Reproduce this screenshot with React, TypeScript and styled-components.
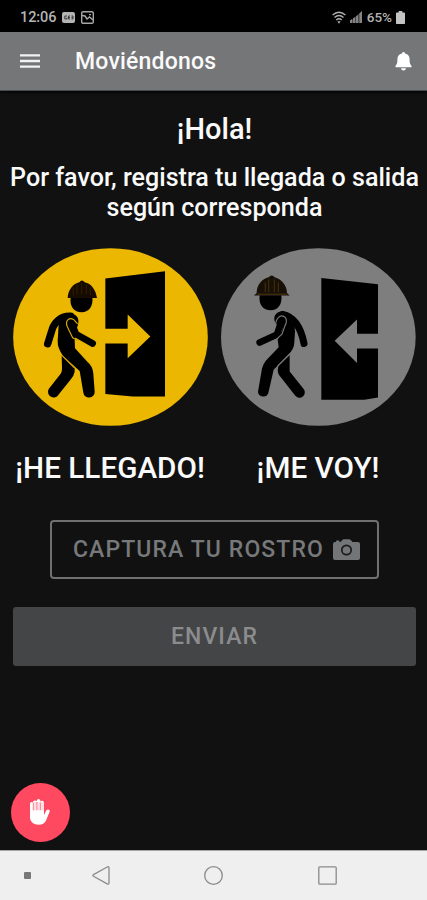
import React from 'react';
import styled, { createGlobalStyle } from 'styled-components';

const GlobalStyle = createGlobalStyle`
  * { box-sizing: border-box; }
  body { margin: 0; background: #111; }
  button { font: inherit; padding: 0; border: 0; background: none; color: inherit; }
  svg { display: block; flex: none; }
`;

const Screen = styled.div`
  display: flex;
  flex-direction: column;
  width: 427px;
  height: 900px;
  overflow: hidden;
  background: #111111;
  color: #fafafa;
  font-family: Roboto, 'Liberation Sans', sans-serif;
  font-weight: 500;
`;

const StatusBar = styled.div`
  display: flex;
  justify-content: space-between;
  height: 32px;
  padding: 2px 22px 0 20px;
  background: #000;
  color: #b4b4b4;
`;

const StatusGroup = styled.div<{ $gap: number }>`
  display: flex;
  align-items: center;
  gap: ${(p) => p.$gap}px;
`;

const StatusText = styled.span<{ $size: number; $spacing: number }>`
  font-size: ${(p) => p.$size}px;
  letter-spacing: ${(p) => p.$spacing}px;
`;

const Header = styled.header`
  display: flex;
  align-items: center;
  height: 59px;
  padding: 0 15px 0 20px;
  background: #757678;
  border-bottom: 1px solid #4a4b4c;
  box-shadow: 0 1px 3px #000;
`;

const Title = styled.h1`
  flex: 1;
  margin: 2px 0 0 35px;
  font-size: 23px;
  font-weight: 500;
  line-height: 28px;
  letter-spacing: 0.2px;
`;

const IconButton = styled.button`
  display: flex;
`;

const Main = styled.main`
  display: flex;
  flex-direction: column;
  flex: 1;
  padding: 21px 11px 8px 13px;
`;

const Greeting = styled.h2`
  margin: 0;
  text-align: center;
  font-size: 29px;
  font-weight: 500;
  line-height: 34px;
`;

const Prompt = styled.p`
  margin: 17px -10px 0;
  text-align: center;
  font-size: 25.1px;
  line-height: 30px;
  white-space: nowrap;
`;

const Choices = styled.div`
  display: flex;
  justify-content: space-between;
  margin-top: 25px;
`;

const Choice = styled.button`
  display: flex;
  flex-direction: column;
  align-items: center;
  gap: 24px;
  width: 195px;

  span {
    margin-right: 1px;
    font-size: 29.7px;
    line-height: 36px;
    white-space: nowrap;
  }
`;

const CaptureButton = styled.button`
  display: flex;
  align-items: center;
  align-self: center;
  gap: 9px;
  width: 329px;
  height: 59px;
  margin-top: 34px;
  padding: 0 17px 0 21px;
  border: 2px solid #707070;
  border-radius: 4px;
  color: #77797a;
  font-size: 23px;
  letter-spacing: 1.1px;
  white-space: nowrap;
`;

const SendButton = styled.button`
  height: 59px;
  margin: 28px 0 0;
  padding-bottom: 1px;
  border-radius: 3px;
  background: #434546;
  color: #8b8c8e;
  font-size: 23px;
  letter-spacing: 1.1px;
`;

const HelpButton = styled.button`
  display: flex;
  align-items: center;
  justify-content: center;
  width: 59px;
  height: 59px;
  margin: auto 0 0 -2px;
  padding: 0 2px 1px 0;
  border-radius: 50%;
  background: #ff4960;
`;

const NavBar = styled.nav`
  display: grid;
  grid-template-columns: 54px 93px 133px 95px;
  align-items: center;
  justify-items: center;
  height: 50px;
  border-top: 1px solid #a5a5a5;
  background: #efefef;
`;

const Limb = styled.path<{ $w: number }>`
  fill: none;
  stroke: #000;
  stroke-width: ${(p) => p.$w};
  stroke-linecap: round;
  stroke-linejoin: round;
`;

const Seam = styled.path`
  fill: none;
  stroke-width: 3.5;
  stroke-linecap: round;
`;

const ArriveArt = () => (
  <svg width="195" height="178" viewBox="23 23 585 535" preserveAspectRatio="none">
    <ellipse cx="315.5" cy="290.5" rx="292" ry="267" fill="#ebb700" />
    <path d="M300 115 479 93V469H382L300 462Z" />
    <path d="M298 266H367V223L435 289 367 354V310H298Z" fill="#ebb700" />
    <path d="M196 171C192 199 206 216 229 216S264 197 261 171Z" />
    <path d="M187 173C188 148 204 130 222 126Q230 116 238 126C258 130 271 148 275 173Z" fill="#170b00" />
    <path d="M204 165V141M215 162V132M229 162V128M243 162V132M255 165V141" fill="none" stroke="#302000" strokeWidth="3" />
    <path d="M160 253C164 230 188 218 205 222C222 229 222 246 215 263L208 302L209 324L246 365Q263 379 264 401L268 454A17 17 0 0 1 234 457L223 393L174 348Q156 325 157 302Z" />
    <Limb $w={22} d="M196 228C164 227 144 249 138 276L127 311" />
    <path d="M169 344 208 383V395Q206 407 196 418L160 463A17 17 0 0 1 130 447L166 401Q171 394 170 384Z" />
    <Limb $w={20} d="M198 245 212 282 262 310" />
    <Seam stroke="#d7a700" d="M186 260C178 239 193 230 206 239L216 250M186 260 202 293 216 300M168 344 207 383" />
  </svg>
);

const LeaveArt = () => (
  <svg width="195" height="178" viewBox="20 23 585 535" preserveAspectRatio="none">
    <ellipse cx="312" cy="290.5" rx="292" ry="267" fill="#7e7e7e" />
    <path d="M321 113 491 132V472L450 479H321Z" />
    <path d="M361 302 428 238V281H493V325H428V369Z" fill="#7e7e7e" />
    <path d="M136 165C132 193 146 210 169 210S204 192 201 165Z" />
    <path d="M119 166 127 158C127 134 143 116 163 111Q172 101 181 111C203 117 218 137 218 158L226 166Z" fill="#180f06" />
    <path d="M129 162H218M153 155V126M163 155V117M180 155V117M192 155V126" fill="none" stroke="#3a290a" strokeWidth="4" />
    <path d="M184 250C174 230 183 215 203 213C227 216 241 243 242 273L240 306Q240 326 221 344L178 389L162 459A16 16 0 0 1 131 455L143 385Q146 372 155 361L193 321L190 299L205 266Z" />
    <Limb $w={21} d="M205 223C243 231 260 264 269 310" />
    <path d="M226 344V394L268 447A16 16 0 0 1 243 467L193 403Q187 390 194 374Z" />
    <Limb $w={20} d="M202 240 188 283 136 307" />
    <Seam stroke="#777" d="M184 250C188 229 202 221 213 232Q220 241 212 257L203 282 190 294M230 339 191 377" />
  </svg>
);

const statusIcons = {
  card: (
    <svg width="13" height="11" viewBox="0 0 13 11">
      <rect width="13" height="11" rx="2" fill="#b4b4b4" />
      <path d="M5 4H2.8V7H5V5.5M8 4H6.5V7H8M6.5 5.5H8M9.5 4H11V7H9.5M9.5 5.5H11" fill="none" stroke="#3c3c3c" />
    </svg>
  ),
  image: (
    <svg width="13" height="13" viewBox="0 0 13 13" fill="none" stroke="#a5a5a5" strokeWidth="1.4">
      <rect x=".7" y=".7" width="11.6" height="11.6" rx="1.4" />
      <path d="M1 4.5 4 5 6 8 8.5 6 12 9M8 3.6H10" />
    </svg>
  ),
  wifi: (
    <svg width="14" height="13" viewBox="0 0 14 13" fill="none" stroke="#b0b0b0" strokeWidth="1.4">
      <path d="M.6 4Q7-1.6 13.4 4M2.5 6.5Q7 2.5 11.5 6.5M4.3 9Q7 6.5 9.7 9" />
      <path d="M5.4 10.3H8.6L7 12.8Z" fill="#b0b0b0" stroke="none" />
    </svg>
  ),
  signal: (
    <svg width="13" height="12" viewBox="0 0 13 12">
      <path d="M0 12V9.5L2 8V12ZM3 12V7.5L5 6V12ZM6 12V5.5L8 4V12ZM9.5 12V2.5L12 0V12Z" fill="#999" />
      <path d="M0 12V10.5L12 0V12Z" fill="#777" opacity=".6" />
    </svg>
  ),
  battery: (
    <svg width="9" height="13" viewBox="0 0 9 13" fill="#c4c4c4">
      <path d="M2.7 0H6.3V1.5H8.2Q9 1.5 9 2.3V12.2Q9 13 8.2 13H.8Q0 13 0 12.2V2.3Q0 1.5.8 1.5H2.7Z" />
    </svg>
  ),
};

const MenuIcon = () => (
  <svg width="20" height="14" viewBox="0 0 20 14" fill="#f2f2f2">
    <path d="M0 .2H20V2.6H0ZM0 5.8H20V8.2H0ZM0 11.4H20V13.8H0Z" />
  </svg>
);

const BellIcon = () => (
  <svg width="17" height="19" viewBox="0 0 17 19" fill="#fff">
    <path d="M8.5 0Q9.8 0 10 1.4C13.2 2.1 14.6 4.4 14.6 7.2C14.6 11 15 12 16.4 13.7Q17.2 15.2 15.8 15.2H1.2Q-.2 15.2.6 13.7C2 12 2.4 11 2.4 7.2C2.4 4.4 3.8 2.1 7 1.4Q7.2 0 8.5 0ZM6 16.2H11Q10.7 18.6 8.5 18.6T6 16.2Z" />
  </svg>
);

const CameraIcon = () => (
  <svg width="27" height="21" viewBox="0 0 27 21">
    <path d="M2 3H7.5L9.5.8Q10 .2 11 .2H16Q17 .2 17.5.8L19.5 3H25Q27 3 27 5V19Q27 21 25 21H2Q0 21 0 19V5Q0 3 2 3Z" fill="#747576" />
    <rect x="3" y="1.6" width="3.5" height="2" rx=".8" fill="#747576" />
    <circle cx="13.5" cy="11" r="4.7" fill="none" stroke="#1b1b1b" strokeWidth="1.7" />
  </svg>
);

const HandIcon = () => (
  <svg width="20" height="26" viewBox="0 0 20 26">
    <path d="M0 4.5Q0 2.9 1.5 2.9T3 4.2V3Q3 1.5 4.8 1.5T6.8 2.4V1.5Q6.8 0 8.6 0T10.4 1.7V2.8Q10.8 1.8 12.2 1.8T14 3.5V16L16.3 11.6Q17.1 10.3 18.8 10.7Q20.2 11.1 19.7 12.5L16 21.5C14.6 24.7 12.1 25.8 8.8 25.8C3.5 25.8 0 22.8 0 18.3Z" fill="#fff" />
    <path d="M3.4 4V11.3M6.9 3V11M10.4 3.5V11" stroke="#ff8d9c" strokeWidth="1.1" />
    <path d="M2.8 3H14V11.5H2.8Z" fill="#ff8293" opacity=".25" />
  </svg>
);

export default function App() {
  return (
    <>
      <GlobalStyle />
      <Screen>
        <StatusBar>
          <StatusGroup $gap={6}>
            <StatusText $size={14.5} $spacing={-0.1}>12:06</StatusText>
            {statusIcons.card}
            {statusIcons.image}
          </StatusGroup>
          <StatusGroup $gap={4}>
            {statusIcons.wifi}
            {statusIcons.signal}
            <StatusText $size={13.5} $spacing={0}>65%</StatusText>
            {statusIcons.battery}
          </StatusGroup>
        </StatusBar>
        <Header>
          <IconButton aria-label="Menú"><MenuIcon /></IconButton>
          <Title>Moviéndonos</Title>
          <IconButton aria-label="Notificaciones"><BellIcon /></IconButton>
        </Header>
        <Main>
          <Greeting>¡Hola!</Greeting>
          <Prompt>
            Por favor, registra tu llegada o salida
            <br />
            según corresponda
          </Prompt>
          <Choices>
            <Choice>
              <ArriveArt />
              <span>¡HE LLEGADO!</span>
            </Choice>
            <Choice>
              <LeaveArt />
              <span>¡ME VOY!</span>
            </Choice>
          </Choices>
          <CaptureButton>
            CAPTURA TU ROSTRO
            <CameraIcon />
          </CaptureButton>
          <SendButton>ENVIAR</SendButton>
          <HelpButton aria-label="Ayuda"><HandIcon /></HelpButton>
        </Main>
        <NavBar>
          <svg width="7" height="7" viewBox="0 0 7 7"><rect width="7" height="7" rx="1" fill="#777" /></svg>
          <svg width="18" height="19" viewBox="0 0 18 19" fill="none" stroke="#8b8b8b" strokeWidth="1.3">
            <path d="M1.5 8.6 15.2 1Q17 .2 17 2V16.8Q17 18.7 15.2 17.8L1.5 10.2Q.3 9.4 1.5 8.6Z" />
          </svg>
          <svg width="19" height="19" viewBox="0 0 19 19"><circle cx="9.5" cy="9.5" r="8.8" fill="none" stroke="#8b8b8b" strokeWidth="1.3" /></svg>
          <svg width="19" height="19" viewBox="0 0 19 19"><rect x=".8" y=".8" width="17.4" height="17.4" rx="1" fill="none" stroke="#8b8b8b" strokeWidth="1.3" /></svg>
        </NavBar>
      </Screen>
    </>
  );
}
